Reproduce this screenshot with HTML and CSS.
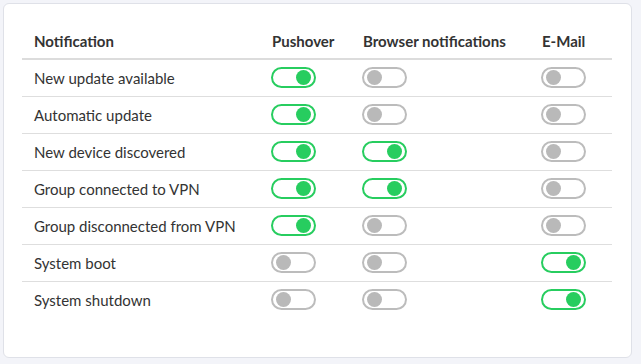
FILE: index.html
```html
<!DOCTYPE html>
<html lang="en">
<head>
    <meta charset="UTF-8">
    <meta name="viewport" content="width=device-width, initial-scale=1.0">
    <title>Notification settings</title>
    <link rel="stylesheet" href="styles.css">
</head>
<body>
    <div class="card">
        <table class="notify-table">
            <colgroup>
                <col class="col-name">
                <col class="col-push">
                <col class="col-browser">
                <col class="col-mail">
            </colgroup>
            <thead>
                <tr>
                    <th>Notification</th>
                    <th>Pushover</th>
                    <th>Browser notifications</th>
                    <th>E-Mail</th>
                </tr>
            </thead>
            <tbody id="rows"></tbody>
        </table>
    </div>

    <script>
        // name, pushover, browser, email
        const settings = [
            ['New update available', true, false, false],
            ['Automatic update', true, false, false],
            ['New device discovered', true, true, false],
            ['Group connected to VPN', true, true, false],
            ['Group disconnected from VPN', true, false, false],
            ['System boot', false, false, true],
            ['System shutdown', false, false, true]
        ];

        const tbody = document.getElementById('rows');
        settings.forEach(function(row) {
            const tr = document.createElement('tr');
            const name = document.createElement('td');
            name.textContent = row[0];
            tr.appendChild(name);
            for (let i = 1; i < 4; i++) {
                const td = document.createElement('td');
                td.innerHTML = '<label class="switch"><input type="checkbox"' + (row[i] ? ' checked' : '') + '><span class="slider"></span></label>';
                tr.appendChild(td);
            }
            tbody.appendChild(tr);
        });
    </script>
</body>
</html>
```

FILE: styles.css
```css
body {
    margin: 0;
    padding: 3px;
    background-color: #f3f4f9;
    font-family: Lato, "Open Sans", sans-serif;
    color: #333;
}
.card {
    width: 629px;
    height: 355px;
    box-sizing: border-box;
    background-color: #fff;
    border: 1px solid #dfe1e8;
    border-radius: 6px;
    padding: 20px 19px 0 18px;
}
.notify-table {
    width: 590px;
    border-collapse: collapse;
    table-layout: fixed;
}
.col-name { width: 238px; }
.col-push { width: 91px; }
.col-browser { width: 179px; }
.col-mail { width: 82px; }
th {
    text-align: left;
    font-size: 15px;
    font-weight: bold;
    line-height: 18px;
    padding: 8px 12px;
    border-bottom: 2px solid #dcdcdc;
}
td {
    font-size: 15px;
    line-height: 18px;
    height: 37px;
    padding: 0 12px;
    box-sizing: border-box;
    vertical-align: middle;
    border-bottom: 1px solid #dedede;
}
tbody tr:last-child td {
    border-bottom: none;
}
.switch {
    position: relative;
    display: block;
    width: 45px;
    height: 21px;
    margin-left: -1px;
    cursor: pointer;
}
.switch input {
    display: none;
}
.slider {
    position: absolute;
    inset: 0;
    border: 2px solid #bcbcbc;
    border-radius: 12px;
    background-color: #fff;
}
.slider::before {
    content: "";
    position: absolute;
    top: 1px;
    left: 3px;
    width: 15px;
    height: 15px;
    border-radius: 50%;
    background-color: #b9b9b9;
}
.switch input:checked + .slider {
    border-color: #27cd5f;
}
.switch input:checked + .slider::before {
    left: 23px;
    background-color: #27cd5f;
}
```
